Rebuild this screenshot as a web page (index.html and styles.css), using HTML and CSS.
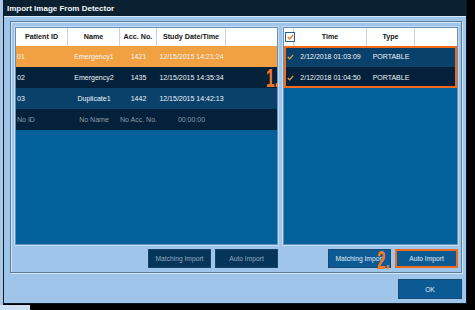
FILE: index.html
```html
<!DOCTYPE html>
<html lang="en">
<head>
    <meta charset="UTF-8">
    <title>Import Image From Detector</title>
    <link rel="stylesheet" href="styles.css">
</head>
<body>
    <div class="window">
        <div class="titlebar">Import Image From Detector</div>

        <div class="group">
            <!-- Lista de estudios -->
            <div class="col col-left">
                <div class="pane">
                    <div class="row row-left head">
                        <div class="cell">Patient ID</div>
                        <div class="cell">Name</div>
                        <div class="cell">Acc. No.</div>
                        <div class="cell">Study Date/Time</div>
                        <div class="cell"></div>
                    </div>
                    <div class="row row-left selected">
                        <div class="cell id">01</div>
                        <div class="cell">Emergency1</div>
                        <div class="cell">1421</div>
                        <div class="cell">12/15/2015 14:21:24</div>
                        <div class="cell"></div>
                    </div>
                    <div class="row row-left dark">
                        <div class="cell id">02</div>
                        <div class="cell">Emergency2</div>
                        <div class="cell">1435</div>
                        <div class="cell">12/15/2015 14:35:34</div>
                        <div class="cell"></div>
                    </div>
                    <div class="row row-left mid">
                        <div class="cell id">03</div>
                        <div class="cell">Duplicate1</div>
                        <div class="cell">1442</div>
                        <div class="cell">12/15/2015 14:42:13</div>
                        <div class="cell"></div>
                    </div>
                    <div class="row row-left dark empty">
                        <div class="cell id">No ID</div>
                        <div class="cell">No Name</div>
                        <div class="cell">No Acc. No.</div>
                        <div class="cell">00:00:00</div>
                        <div class="cell"></div>
                    </div>
                </div>
                <div class="buttons">
                    <button class="btn btn-off">Matching Import</button>
                    <button class="btn btn-off">Auto Import</button>
                </div>
            </div>

            <!-- Lista de imágenes del detector -->
            <div class="col col-right">
                <div class="pane">
                    <div class="row row-right head">
                        <div class="cell"><span class="checkbox"><svg width="7" height="6" viewBox="0 0 7 6"><path d="M0.8 3 L2.7 4.9 L6.2 0.9" fill="none" stroke="#e07a22" stroke-width="1.4"/></svg></span></div>
                        <div class="cell">Time</div>
                        <div class="cell">Type</div>
                        <div class="cell"></div>
                    </div>
                    <div class="marked">
                        <div class="row row-right mid">
                            <div class="cell"><svg class="tick" width="7" height="6" viewBox="0 0 7 6"><path d="M0.8 3 L2.7 4.9 L6.2 0.9" fill="none" stroke="#e9a24e" stroke-width="1.3"/></svg></div>
                            <div class="cell">2/12/2018 01:03:09</div>
                            <div class="cell">PORTABLE</div>
                            <div class="cell"></div>
                        </div>
                        <div class="row row-right dark">
                            <div class="cell"><svg class="tick" width="7" height="6" viewBox="0 0 7 6"><path d="M0.8 3 L2.7 4.9 L6.2 0.9" fill="none" stroke="#e9a24e" stroke-width="1.3"/></svg></div>
                            <div class="cell">2/12/2018 01:04:50</div>
                            <div class="cell">PORTABLE</div>
                            <div class="cell"></div>
                        </div>
                    </div>
                </div>
                <div class="buttons">
                    <button class="btn">Matching Import</button>
                    <button class="btn btn-marked">Auto Import</button>
                </div>
            </div>
        </div>

        <div class="footer">
            <button class="btn btn-ok">OK</button>
        </div>

        <div class="step step-1">1.</div>
        <div class="step step-2">2.</div>
    </div>
</body>
</html>
```

FILE: styles.css
```css
body {
    margin: 0;
    width: 475px;
    height: 310px;
    overflow: hidden;
    font-family: 'Liberation Sans', Arial, sans-serif;
    background:
        linear-gradient(#cfe1f3, #cfe1f3) 0 305px / 30px 5px no-repeat,
        linear-gradient(to right, #aac9e7 3px, #000 3px);
    padding-left: 3px;
    box-sizing: border-box;
}
.window {
    position: relative;
    width: 464px;
    height: 304px;
    box-sizing: border-box;
    background-color: #9fc5ea; /* azul claro del cuadro */
    border-left: 1px solid #0d1b26;
    border-right: 1px solid #0d1b26;
    border-bottom: 1px solid #0d1b26;
}
.titlebar {
    height: 17px;
    line-height: 17px;
    padding-left: 3px;
    background-color: #0b2131;
    color: #f2f6fa;
    font-size: 8px;
    font-weight: bold;
    border-bottom: 1px solid #d9e9f8;
    box-sizing: border-box;
}
.group {
    display: flex;
    gap: 5px;
    width: 452px;
    box-sizing: border-box;
    margin: 4px 0 0 6px;
    padding: 5px 3px 4px 4px;
    border: 1px solid #5b7b9b;
    box-shadow: inset 1px 1px 0 #d6e8f8, 1px 1px 0 #d6e8f8;
}
.col {
    display: flex;
    flex-direction: column;
    gap: 4px;
}
.col-left {
    width: 263px;
}
.col-right {
    width: 175px;
}
.pane {
    height: 218px;
    box-sizing: border-box;
    background-color: #02619b;
    border: 1px solid #6a90b6;
    box-shadow: 0 0 0 1px #c2dbf2;
}
.row {
    display: grid;
    height: 21px;
    align-items: center;
    font-size: 7px;
    color: #eef3f8;
}
.row-left {
    grid-template-columns: 52px 52px 37px 69px 1fr;
}
.row-right {
    grid-template-columns: 10px 73px 48px 1fr;
}
.cell {
    text-align: center;
    white-space: nowrap;
    overflow: visible;
}
.cell.id {
    text-align: left;
    padding-left: 1px;
}
.head {
    height: 18px;
    background-color: #fff;
    color: #141414;
    font-size: 7.2px;
    font-weight: bold;
}
.head .cell {
    height: 18px;
    line-height: 18px;
    border-right: 1px solid #cdd3d8;
}
.head .cell:last-child {
    border-right: none;
}
.selected {
    background-color: #f1a142;
}
.dark {
    background-color: #03213a;
}
.mid {
    background-color: #0a416b;
}
.empty {
    color: #8d9cab;
}
.marked {
    outline: 2px solid #f26a1c;
    outline-offset: -2px;
}
.marked .row {
    height: 21px;
}
.tick {
    display: block;
    margin-left: 3px;
}
.checkbox {
    display: flex;
    align-items: center;
    justify-content: center;
    width: 8px;
    height: 8px;
    margin: 4px 0 0 1px;
    background-color: #fff;
    border: 1px solid #2e5f90;
}
.buttons {
    display: flex;
    justify-content: flex-end;
    gap: 4px;
}
.btn {
    width: 63px;
    height: 19px;
    padding: 0;
    box-sizing: border-box;
    font-family: 'Liberation Sans', Arial, sans-serif;
    font-size: 6.7px;
    color: #e4ecf4;
    background-color: #0b5a93;
    border: 1px solid #174b75;
    cursor: pointer;
}
.btn-off {
    color: #93aac0;
    background-color: #063559;
    border-color: #164468;
}
.btn-marked {
    border: 2px solid #f26a1c;
}
.footer {
    display: flex;
    justify-content: flex-end;
    padding: 6px 4px 0 0;
}
.btn-ok {
    width: 64px;
    height: 20px;
}
.step {
    position: absolute;
    font-size: 25px;
    line-height: 25px;
    font-weight: bold;
    color: #f27a25;
    transform: scaleX(0.62);
    transform-origin: left top;
}
.step-1 {
    left: 262px;
    top: 66px;
}
.step-2 {
    left: 373px;
    top: 248px;
}
```
